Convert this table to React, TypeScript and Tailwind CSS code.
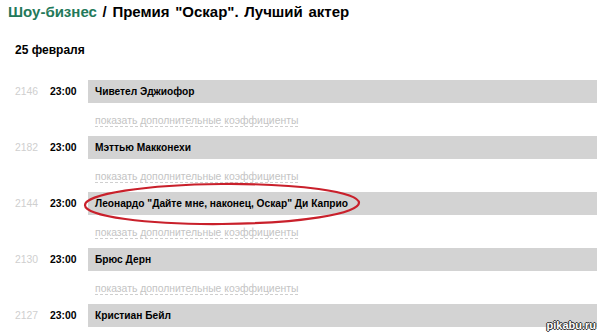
import React from "react";

const rows = [
  { id: "2146", name: "Чиветел Эджиофор" },
  { id: "2182", name: "Мэттью Макконехи" },
  { id: "2144", name: 'Леонардо "Дайте мне, наконец, Оскар" Ди Каприо' },
  { id: "2130", name: "Брюс Дерн" },
  { id: "2127", name: "Кристиан Бейл" },
];

export default function App() {
  return (
    <div className="relative w-[600px] h-[335px] overflow-hidden bg-white font-['Liberation_Sans',Arial,sans-serif] text-black">
      {/* breadcrumb title */}
      <div className="pl-[8px] pt-[3px] text-[15px] font-bold leading-[18px] [word-spacing:1.5px]">
        <span className="text-[#23795a]">Шоу-бизнес</span> / Премия "Оскар". Лучший актер
      </div>

      <div className="pl-[15px] pt-[22px] text-[12px] font-bold leading-[14px]">25 февраля</div>

      <div className="pt-[23px]">
        {rows.map((r, i) => (
          <div key={r.id}>
            <div className="flex h-[23px] items-center pl-[15px] pr-[3px] text-[10.4px]">
              <span className="w-[35px] text-[#cfcfcf]">{r.id}</span>
              <span className="w-[38px] font-bold">23:00</span>
              <div className="flex h-full flex-1 items-center bg-[#d3d3d3] pl-[7px] text-[10.2px] font-bold">{r.name}</div>
            </div>
            {i < rows.length - 1 && (
              <div className="h-[33px] pl-[95px] pt-[11px] text-[10.4px] leading-[13px]">
                <span className="border-b border-dashed border-[#cfcfcf] text-[#c4c4c4]">
                  показать дополнительные коэффициенты
                </span>
              </div>
            )}
          </div>
        ))}
      </div>

      {/* red marker ellipse */}
      <svg className="absolute left-[80px] top-[180px]" width="290" height="50" viewBox="0 0 290 50">
        <ellipse cx="142" cy="24" rx="137" ry="20" fill="none" stroke="#c9202b" strokeWidth="2.2" transform="rotate(-0.5 142 24)" />
      </svg>

      {/* watermark */}
      <div className="absolute bottom-[2px] right-[4px] text-[11px] font-bold text-white [text-shadow:0_0_1px_#333,1px_0_0_#333,-1px_0_0_#333,0_1px_0_#333,0_-1px_0_#333]">
        pikabu.ru
      </div>
    </div>
  );
}
